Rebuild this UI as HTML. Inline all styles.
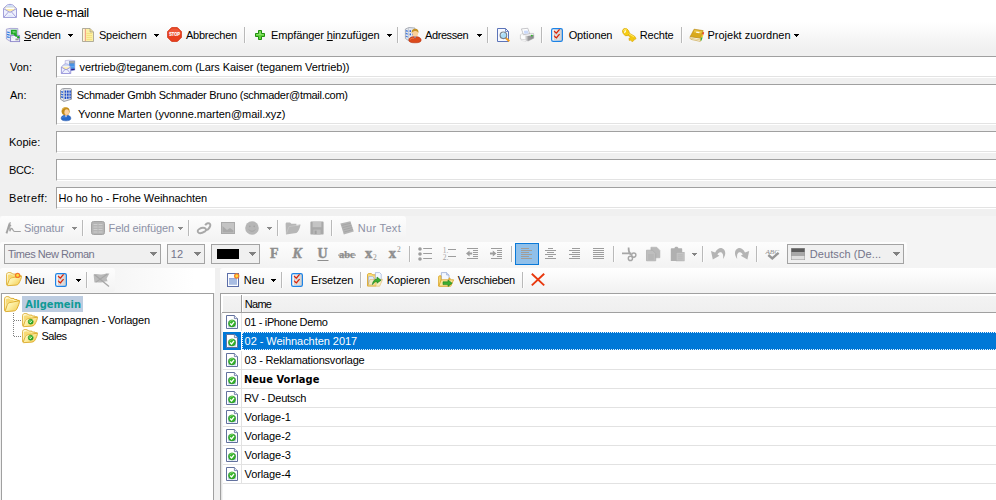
<!DOCTYPE html>
<html lang="de">
<head>
<meta charset="utf-8">
<title>Neue e-mail</title>
<style>
html,body{margin:0;padding:0;}
body{width:996px;height:500px;overflow:hidden;position:relative;background:#f0f0f0;
 font-family:"Liberation Sans",sans-serif;font-size:11px;color:#000;}
.a{position:absolute;}
.t{position:absolute;white-space:pre;line-height:13px;height:13px;font-size:11px;}
.box{position:absolute;background:#fff;border-top:1px solid #a0a0a0;border-left:1px solid #a0a0a0;border-bottom:1px solid #fff;box-shadow:inset 0 -1px 0 #e3e3e3;left:56px;width:950px;box-sizing:border-box;}
.sep{position:absolute;width:1px;height:16px;background:#b9b9b9;box-shadow:1px 0 0 #fdfdfd;}
.sep.g{background:#b9b9b9;}
.arr{position:absolute;width:0;height:0;border-left:3px solid transparent;border-right:3px solid transparent;border-top:3px solid #000;}
.arr.g{border-top-color:#8c8c8c;}
.arr.s{border-left-width:2.5px;border-right-width:2.5px;}
.arr.b{border-left-width:3.5px;border-right-width:3.5px;border-top-width:4px;border-top-color:#808080;}
svg{position:absolute;overflow:visible;}
.combo{position:absolute;box-sizing:border-box;border:1px solid #a3a3a3;background:#f0f0f0;height:20px;top:244px;}
.row{position:absolute;left:223px;width:773px;height:18px;border-bottom:1px solid #e2e2e2;background:#fff;}
.row i{position:absolute;left:18px;top:0;width:1px;height:18px;background:#e2e2e2;}
.band{position:absolute;background:linear-gradient(#fdfdfd,#f3f3f3);border-radius:3px;}
</style>
</head>
<body>
<!-- title bar -->
<div class="a" style="left:0;top:0;width:996px;height:22px;background:#fff"></div>
<svg style="left:3px;top:4px" width="14" height="14" viewBox="0 0 14 14"><path d="M0.5 4.4 L4.4 0.9 C5.4 0.2 8.6 0.2 9.6 0.9 L13.5 4.4 V13.5 H0.5 Z" fill="#eef0fd" stroke="#9896d6" stroke-width=".9"/><path d="M2 4 L4.8 1.4 C5.6 0.9 8.4 0.9 9.2 1.4 L12 4 Z" fill="#cddff9"/><path d="M2.2 3.2 H11.8 V5.4 L7 8 L2.2 5.4 Z" fill="#ffffff" stroke="#c9c4b0" stroke-width=".5"/><path d="M2.4 5 H11.6 V5.6 L8.6 7.2 H5.4 L2.4 5.6 Z" fill="#fdeca6"/><path d="M0.8 4.8 L7 8.4 L13.2 4.8 M0.9 13.2 L5.6 7.8 M13.1 13.2 L8.4 7.8" fill="none" stroke="#9896d6" stroke-width=".85"/><path d="M3.4 12.6 C5 10.4 9 10.4 10.6 12.6 Z" fill="#d5e4fa" opacity=".8"/></svg>
<div class="t" style="left:23px;top:6px;letter-spacing:-0.4px;font-size:13px;">Neue e-mail</div>
<!-- main toolbar -->
<div class="a" style="left:0;top:22px;width:996px;height:27px;background:linear-gradient(#fff,#f0f0f0)"></div>
<svg style="left:6px;top:28px" width="14" height="14" viewBox="0 0 14 14"><path d="M0.4 1.2 L4 0.4 L11.8 0.5 V7.4 H4.6 V13.5 L0.4 11 Z" fill="#e6ebf7" stroke="#9b97cd" stroke-width=".8"/><path d="M4.3 1.2 V13" stroke="#b9b6dc" stroke-width=".7"/><path d="M1 4 L3.7 4.7 M1 6.4 L3.7 7.1 M1 8.8 L3.7 9.5" stroke="#2a7ae2" stroke-width="1.2"/><rect x="4.6" y="7.4" width="9" height="6.2" fill="#f3f5fd" stroke="#8c85c9" stroke-width=".9"/><path d="M5 7.8 L7.4 10 M13.2 7.8 L10.6 10" stroke="#c5c3e2" stroke-width=".7"/><rect x="9.4" y="10.6" width="3.2" height="1.7" fill="#9a9a9a"/><path d="M5 1.8 H10.8 V6.6 L11.6 9 L9.2 8.6 L7.6 6.4 H5 Z" fill="#21a62a"/><path d="M6.2 3 H9.6 V5.4 L8.4 4.6 L7.2 5.4 Z" fill="#7ee07c" opacity=".8"/><circle cx="12.3" cy="9.2" r="1.2" fill="#1f9e28"/></svg>
<div class="t" style="left:24px;top:29px;letter-spacing:-0.2px;"><u>S</u>enden</div>
<svg style="left:68px;top:34px" width="5" height="3" shape-rendering="crispEdges"><path d="M0 0h5v1h-1v1h-1v1h-1v-1h-1v-1h-1z" fill="#000"/></svg>
<svg style="left:82px;top:28px" width="12" height="14" viewBox="0 0 12 14"><path d="M0.5 0.5 H8 L11.5 4 V13.5 H0.5 Z" fill="#fbf0a4" stroke="#9a9588" stroke-width=".75"/><path d="M1 1 H3 V13 H1 Z" fill="#fdf8d8"/><path d="M8 0.5 V4 H11.5" fill="#e8d890" stroke="#9a9588" stroke-width=".6"/><path d="M3.3 1 V13" stroke="#ee8a7a" stroke-width=".9"/><path d="M4.5 5.5 H10 M4.5 7.5 H10 M4.5 9.5 H10 M4.5 11.5 H10" stroke="#f3dc78" stroke-width=".8"/></svg>
<div class="t" style="left:99px;top:29px;letter-spacing:-0.22px;">Speichern</div>
<svg style="left:154px;top:34px" width="5" height="3" shape-rendering="crispEdges"><path d="M0 0h5v1h-1v1h-1v1h-1v-1h-1v-1h-1z" fill="#000"/></svg>
<svg style="left:166.7px;top:27.4px" width="15" height="15" viewBox="0 0 15 15"><path d="M4.6 0.6 H10.4 L14.4 4.6 V10.4 L10.4 14.4 H4.6 L0.6 10.4 V4.6 Z" fill="#e8401e" stroke="#d03010" stroke-width=".8"/><path d="M4.8 1.4 H10.2 L13.6 4.8 V7 H1.4 V4.8 Z" fill="#f0674a" opacity=".6"/><text x="7.5" y="9.4" font-family="Liberation Sans,sans-serif" font-size="5.2" font-weight="bold" fill="#fff" stroke="#fff" stroke-width=".2" text-anchor="middle" textLength="10.4" lengthAdjust="spacingAndGlyphs">STOP</text></svg>
<div class="t" style="left:186px;top:29px;letter-spacing:-0.25px;">Abbrechen</div>
<div class="sep " style="left:244px;top:27px"></div>
<svg style="left:255px;top:30px" width="10" height="10" viewBox="0 0 10 10"><path d="M3.5 0.5 H6.5 V3.5 H9.5 V6.5 H6.5 V9.5 H3.5 V6.5 H0.5 V3.5 H3.5 Z" fill="#5fd238" stroke="#1f8f0e"/><path d="M4.3 1.3 H5.7 V4.3 H8.7 V5 H1.3 V4.3 H4.3 Z" fill="#9be57e" opacity=".8"/></svg>
<div class="t" style="left:271px;top:29px;letter-spacing:-0.11px;">Empfänger <u>h</u>inzufügen</div>
<svg style="left:387px;top:34px" width="5" height="3" shape-rendering="crispEdges"><path d="M0 0h5v1h-1v1h-1v1h-1v-1h-1v-1h-1z" fill="#000"/></svg>
<div class="sep " style="left:397px;top:27px"></div>
<svg style="left:404px;top:27px" width="18" height="16" viewBox="0 0 18 16"><path d="M1.4 2 L4.9 0.5 L10.9 1 V12.5 L4.9 13.8 L1.4 11.5 Z" fill="#e4e8ee" stroke="#9a9faa" stroke-width=".8"/><path d="M4.5 0.8 V13.5" stroke="#b4b9c4" stroke-width=".6"/><path d="M1.8 3.6 L3.8 4.4 M1.8 6.4 L3.8 7.2 M1.8 9.2 L3.8 10" stroke="#3f78e0" stroke-width="1.2"/><path d="M5.6 3.2 H7 V5 H5.6 Z M5.6 6.4 H7 V8.2 H5.6 Z M8 3.2 H9.4 V5 H8 Z M8 6.4 H9.4 V8.2 H8 Z" fill="#2f63d8"/><path d="M4.9 13.4 C4.6 11 7.2 9.6 11 9.6 C14.8 9.6 17.4 11 17.1 13.4 C16.9 15.2 14.6 15.8 11 15.8 C7.4 15.8 5.1 15.2 4.9 13.4 Z" fill="#dc4a1c" stroke="#b83410" stroke-width=".6"/><path d="M6 12.6 C7.4 11 9 10.8 10 11.6" fill="none" stroke="#ee7a4c" stroke-width=".9"/><path d="M9.6 9.6 L11 11.6 L12.4 9.6 Z" fill="#8a90c0"/><ellipse cx="11.2" cy="6" rx="3" ry="3.6" fill="#fbd09a"/><path d="M7.8 6.2 C7.4 2.6 9.4 1.6 11.4 1.7 C13.6 1.8 15 3.2 14.4 6.2 C14 4.8 13 3.8 11 4 C9.4 4.1 8.4 5 7.8 6.2 Z" fill="#c69228"/></svg>
<div class="t" style="left:425px;top:29px;letter-spacing:-0.41px;">Adressen</div>
<svg style="left:477px;top:34px" width="5" height="3" shape-rendering="crispEdges"><path d="M0 0h5v1h-1v1h-1v1h-1v-1h-1v-1h-1z" fill="#000"/></svg>
<div class="sep " style="left:487px;top:27px"></div>
<svg style="left:497px;top:28px" width="13" height="14" viewBox="0 0 13 14"><path d="M0.5 0.5 H8.5 L11.5 3.5 V13.5 H0.5 Z" fill="#f7f9ff" stroke="#5c74b8"/><path d="M8.5 0.5 V3.5 H11.5" fill="none" stroke="#5c74b8" stroke-width=".8"/><path d="M8.6 9.8 L12.3 13.3" stroke="#f59a1e" stroke-width="2"/><circle cx="6.4" cy="7.3" r="3.3" fill="#aadcf6" stroke="#7c8088" stroke-width="1.1"/><path d="M4.6 6.6 A2 2 0 0 1 6.6 5" fill="none" stroke="#e8f8ff" stroke-width=".8"/></svg>
<svg style="left:520px;top:28px" width="14" height="14" viewBox="0 0 14 14"><defs><linearGradient id="prg" x1="0" y1="0" x2="1" y2="0"><stop offset=".3" stop-color="#fcfcfc"/><stop offset=".6" stop-color="#9a9a9c"/><stop offset="1" stop-color="#858588"/></linearGradient></defs><path d="M0.4 6.8 L3 5.4 L13.4 5.4 L13.8 6.8 V10.2 L8.2 13 L0.4 11 Z" fill="url(#prg)" stroke="#aaaaae" stroke-width=".5"/><path d="M0.5 6.9 L3 5.5 L13.4 5.5 L13.7 6.9 L7.6 8 Z" fill="#efeff1"/><path d="M1.4 0.9 L7.8 0.3 L9.6 5.6 L3.5 6.7 Z" fill="#ffffff" stroke="#a2a2aa" stroke-width=".6"/><path d="M3.7 2.8 L7.6 2.4 L8.8 5.3 L4.5 6.1 Z" fill="#c9d8f8"/><path d="M1.8 11.2 L6.8 12.4 L6 13.6 L1.4 12.4 Z" fill="#fff" stroke="#c4c4c8" stroke-width=".4"/><circle cx="11.8" cy="7.6" r=".95" fill="#30c028"/></svg>
<div class="sep " style="left:541px;top:27px"></div>
<svg style="left:551px;top:28px" width="12" height="14" viewBox="0 0 12 14"><defs><linearGradient id="opg" x1="0" y1="0" x2="1" y2="0"><stop offset="0" stop-color="#fbfbfb"/><stop offset="1" stop-color="#cdcdcd"/></linearGradient></defs><rect x="0.6" y="0.6" width="10.8" height="12.8" rx="1.6" fill="url(#opg)" stroke="#1d83e6" stroke-width="1.2"/><rect x="3.6" y="4.6" width="3" height="2.2" fill="#fff" stroke="#b4b4b4" stroke-width=".5"/><rect x="3.6" y="9.4" width="3" height="2.2" fill="#fff" stroke="#b4b4b4" stroke-width=".5"/><path d="M3.1 2.9 L5.2 5.2 L8.6 1.3" fill="none" stroke="#d8240a" stroke-width="1.25"/><path d="M3.1 7.7 L5.2 10 L8.6 6.1" fill="none" stroke="#d8240a" stroke-width="1.25"/></svg>
<div class="t" style="left:568.7px;top:29px;letter-spacing:-0.12px;">Optionen</div>
<svg style="left:621.7px;top:28.4px" width="15" height="14" viewBox="0 0 15 14"><path d="M6 4.4 L12.6 8.2 L14.1 10.6 L12.7 11.7 L11.7 10.8 L11.7 12.7 L10 13.7 L8.8 12.1 L7.3 12.5 L6.9 10.4 L8.7 9.3 L5.2 6.8 Z" fill="#f4c90e" stroke="#d7a306" stroke-width=".6"/><ellipse cx="3.9" cy="4.1" rx="3" ry="3.9" transform="rotate(-28 3.9 4.1)" fill="#f6cd14" stroke="#d9a508" stroke-width=".7"/><path d="M1.6 3 C2 1.6 3.4 0.8 4.8 1" fill="none" stroke="#fff27e" stroke-width=".9"/><ellipse cx="3.1" cy="3.7" rx=".75" ry="1.6" transform="rotate(28 3.1 3.7)" fill="#fffbe6"/><path d="M6.6 5.6 L12 8.9" stroke="#fff07a" stroke-width=".8"/></svg>
<div class="t" style="left:639.7px;top:29px;letter-spacing:-0.16px;">Rechte</div>
<div class="sep " style="left:681px;top:27px"></div>
<svg style="left:689px;top:29px" width="16" height="13" viewBox="0 0 16 13"><path d="M13.4 2.8 L15.2 3.4 L14.4 5.8 L12.8 5.4 Z" fill="#ea3a24"/><path d="M12.7 5.6 L14.4 6 L13.6 8.4 L12 8 Z" fill="#f4d020"/><path d="M11.8 8.2 L13.6 8.6 L12.4 11.8 L10.8 11.4 Z" fill="#35b235"/><path d="M1.2 7.6 L11.5 9.1 L11.3 12.4 L2 10.4 C1 10 0.8 8.6 1.2 7.6 Z" fill="#fdfdf6" stroke="#c2962a" stroke-width=".6"/><path d="M1.6 9.2 L11.3 10.9" stroke="#d8b040" stroke-width=".6"/><path d="M5.1 0.2 L14.2 1.6 L11.5 9.1 L1.2 7.6 Z" fill="#d9a91c" stroke="#b88a10" stroke-width=".6"/><path d="M5.6 1 L13 2.2 L12.2 4.4 L4.6 3.2 Z" fill="#f0d058" opacity=".75"/><path d="M7.4 2.4 L10.6 2.9 L10.2 4.2 L7 3.7 Z" fill="#fffbe8"/></svg>
<div class="t" style="left:707.5px;top:29px;letter-spacing:-0.01px;">Projekt zuordnen</div>
<svg style="left:794px;top:34px" width="5" height="3" shape-rendering="crispEdges"><path d="M0 0h5v1h-1v1h-1v1h-1v-1h-1v-1h-1z" fill="#000"/></svg>
<!-- address form -->
<div class="t" style="left:10px;top:61px;">Von:</div>
<div class="box" style="top:56px;height:22px"></div>
<svg style="left:61px;top:60px" width="14" height="14" viewBox="0 0 14 14"><path d="M4.2 0.6 L8 0.2 L13.8 0.6 V10.2 L9 10.8 L4.2 10 Z" fill="#eceefb" stroke="#a9a6d6" stroke-width=".6"/><path d="M8.2 1 L13.6 1 V10 L8.2 10.6 Z" fill="#2c7fe0"/><path d="M8.2 1 L13.6 1 V3.4 L8.2 3.6 Z" fill="#a4a4a8"/><path d="M8.2 9 L13.6 8.6 V10 L8.2 10.6 Z" fill="#2c1c84"/><path d="M8.4 5 H13.4 M8.4 6.6 H13.4 M8.4 8 H13.4" stroke="#8ec4f8" stroke-width=".6"/><g transform="translate(0 3.8) scale(.72)"><path d="M0.5 4.4 L4.4 0.9 C5.4 0.2 8.6 0.2 9.6 0.9 L13.5 4.4 V13.5 H0.5 Z" fill="#eef0fd" stroke="#8f8cd6" stroke-width="1.2"/><path d="M2 4 L4.8 1.4 C5.6 0.9 8.4 0.9 9.2 1.4 L12 4 Z" fill="#cddff9"/><path d="M2.2 3.2 H11.8 V5.4 L7 8 L2.2 5.4 Z" fill="#ffffff" stroke="#c9c4b0" stroke-width=".5"/><path d="M2.4 4.8 H11.6 V5.6 L8.6 7.2 H5.4 L2.4 5.6 Z" fill="#fdeca6"/><path d="M0.8 4.8 L7 8.4 L13.2 4.8 M0.9 13.2 L5.6 7.8 M13.1 13.2 L8.4 7.8" fill="none" stroke="#8f8cd6" stroke-width="1.1"/></g></svg>
<div class="t" style="left:79.5px;top:61px;letter-spacing:-0.09px;">vertrieb@teganem.com (Lars Kaiser (teganem Vertrieb))</div>
<div class="t" style="left:10px;top:89px;">An:</div>
<div class="box" style="top:84px;height:41px"></div>
<svg style="left:60px;top:88px" width="12" height="14" viewBox="0 0 12 14"><path d="M0.5 2.2 C1.6 1 2.6 0.6 3.8 0.5 L10.6 0.6 C11.2 0.7 11.5 1 11.5 1.6 V11.2 L3.8 13.5 L0.5 11.2 Z" fill="#e6e8ec" stroke="#85888f" stroke-width=".8"/><path d="M3.7 1 V13.2" stroke="#a3a7b0" stroke-width=".6"/><path d="M1.1 3.6 L3.1 4.3 M1.1 6.2 L3.1 6.9 M1.1 8.8 L3.1 9.5" stroke="#2f66d6" stroke-width="1.5"/><path d="M4.6 2.4 h1.7 v2.3 h-1.7 Z M7 2.4 h1.7 v2.3 h-1.7 Z M9.4 2.4 h1.5 v2.3 h-1.5 Z M4.6 5.5 h1.7 v2.3 h-1.7 Z M7 5.5 h1.7 v2.3 h-1.7 Z M9.4 5.5 h1.5 v2.3 h-1.5 Z M4.6 8.6 h1.7 v2.3 h-1.7 Z M7 8.6 h1.7 v2.1 h-1.7 Z M9.4 8.6 h1.5 v1.8 h-1.5 Z" fill="#1d4cc6"/></svg>
<div class="t" style="left:76.7px;top:89px;letter-spacing:-0.3px;">Schmader Gmbh Schmader Bruno (schmader@tmail.com)</div>
<svg style="left:61px;top:107px" width="10" height="14" viewBox="0 0 10 14"><path d="M0.2 11.6 C0 9.4 2 8 5 8 C8 8 10 9.4 9.8 11.6 C9.7 13.2 7.8 13.8 5 13.8 C2.2 13.8 0.3 13.2 0.2 11.6 Z" fill="#2668ca" stroke="#1a4ea6" stroke-width=".5"/><path d="M3.8 8.2 L5 10.6 L6.2 8.2 Z" fill="#e6f0ff"/><path d="M1.4 10.6 C2.4 9.6 3.4 9.6 4.2 10.2" fill="none" stroke="#5a94e6" stroke-width=".8"/><circle cx="4.6" cy="4.2" r="4" fill="#c08a1a"/><path d="M1.2 3 C2 1 4 0.4 5.6 0.8" fill="none" stroke="#e2b44a" stroke-width=".9"/><ellipse cx="5.7" cy="5.2" rx="2.3" ry="2.9" fill="#fcd2a2"/><path d="M4 7 C5 8.2 6.6 8.2 7.6 6.8 C7 8 6.2 8.6 5.6 8.6 C5 8.6 4.4 8 4 7 Z" fill="#f09a50"/></svg>
<div class="t" style="left:78px;top:108px;letter-spacing:-0.02px;">Yvonne Marten (yvonne.marten@mail.xyz)</div>
<div class="t" style="left:9px;top:136px;">Kopie:</div>
<div class="box" style="top:131px;height:22px"></div>
<div class="t" style="left:9px;top:164px;letter-spacing:-0.33px;">BCC:</div>
<div class="box" style="top:159px;height:22px"></div>
<div class="t" style="left:9px;top:192px;letter-spacing:0.43px;">Betreff:</div>
<div class="box" style="top:187px;height:22px"></div>
<div class="t" style="left:58.6px;top:192px;letter-spacing:-0.06px;">Ho ho ho - Frohe Weihnachten</div>
<!-- editor toolbar 1 -->
<div class="a" style="left:0;top:216px;width:996px;height:52px;background:#f4f4f4"></div>
<div class="band" style="left:0;top:216px;width:406px;height:24px"></div>
<svg style="left:6px;top:222px" width="15" height="12" viewBox="0 0 15 12"><path d="M0.5 11.4 L3.6 1.6" stroke="#a2a2a2" stroke-width="1.9" fill="none"/><path d="M3 1.2 L5 0.8 M2.2 3.6 H5.2" stroke="#a2a2a2" stroke-width="1.1" fill="none"/><path d="M3.7 1.6 L3.9 9.2 C4.4 7.6 5.2 6.2 6 6.5 C6.9 6.9 6.9 9.5 8.6 9.5 H14.8" stroke="#a2a2a2" stroke-width="1.2" fill="none"/></svg>
<div class="t" style="left:24px;top:222px;letter-spacing:-0.12px;color:#8d91a6;">Signatur</div>
<svg style="left:72px;top:227px" width="5" height="3" shape-rendering="crispEdges"><path d="M0 0h5v1h-1v1h-1v1h-1v-1h-1v-1h-1z" fill="#8a8a8a"/></svg>
<div class="sep g" style="left:82px;top:220px"></div>
<svg style="left:91px;top:221px" width="14" height="14" viewBox="0 0 14 14"><rect x="0.5" y="0.5" width="13" height="13" rx="2" fill="#b4b4b4" stroke="#a4a4a4"/><path d="M2.5 3.5 H6.5 M7.5 3.5 H11.5 M2.5 6 H6.5 M7.5 6 H11.5 M2.5 8.5 H6.5 M7.5 8.5 H11.5 M2.5 11 H6.5 M7.5 11 H11.5" stroke="#cdcdcd" stroke-width="1"/></svg>
<div class="t" style="left:108.5px;top:222px;letter-spacing:-0.08px;color:#8d91a6;">Feld einfügen</div>
<svg style="left:178px;top:227px" width="5" height="3" shape-rendering="crispEdges"><path d="M0 0h5v1h-1v1h-1v1h-1v-1h-1v-1h-1z" fill="#8a8a8a"/></svg>
<div class="sep g" style="left:188px;top:220px"></div>
<svg style="left:197px;top:222px" width="14" height="12" viewBox="0 0 14 12"><path d="M8.2 3.2 C9.6 1 12 0.6 13 2 C14 3.4 12.6 5.6 11 7.4 L8.4 8.4" fill="none" stroke="#a8a8a8" stroke-width="2"/><path d="M2.2 7 C0.4 8 0.2 10 1.6 10.8 C3.2 11.8 6 10.6 8 9.4 C9.6 8.2 9.2 6.6 7.6 6 C6 5.4 3.8 6 2.2 7 Z" fill="none" stroke="#a8a8a8" stroke-width="1.9"/></svg>
<svg style="left:221px;top:222px" width="14" height="12" viewBox="0 0 14 12"><rect x="0.5" y="0.5" width="13" height="11" fill="#c4c4c4" stroke="#aaaaaa"/><path d="M1.5 4 L6 8 L9 6 L12.5 8.6 V10.5 H1.5 Z" fill="#a9a9a9"/></svg>
<svg style="left:245px;top:221px" width="14" height="14" viewBox="0 0 14 14"><circle cx="7" cy="7" r="6.8" fill="#b6b6b6"/><circle cx="4.8" cy="5.4" r=".8" fill="#a2a2a2"/><circle cx="9.2" cy="5.4" r=".8" fill="#a2a2a2"/><path d="M3.8 8.6 C5.4 10.8 8.6 10.8 10.2 8.6" fill="none" stroke="#a2a2a2" stroke-width=".9"/></svg>
<svg style="left:267px;top:227px" width="5" height="3" shape-rendering="crispEdges"><path d="M0 0h5v1h-1v1h-1v1h-1v-1h-1v-1h-1z" fill="#8a8a8a"/></svg>
<div class="sep g" style="left:277px;top:220px"></div>
<svg style="left:285px;top:221px" width="16" height="14" viewBox="0 0 16 14"><path d="M0.6 3 C0.6 2 1 1.4 2 1.4 H5 L6.4 2.8 H11.4 V5 L15.6 3.4 C14.6 8 13 11 11.4 12 L1 13.4 Z" fill="#b6b6b6"/><path d="M1.4 12.6 L4 5.6 L15 3.8" fill="none" stroke="#c8c8c8" stroke-width=".8"/></svg>
<svg style="left:310px;top:221px" width="14" height="14" viewBox="0 0 14 14"><path d="M0.4 1.6 C0.4 0.8 0.8 0.4 1.6 0.4 H12.4 C13.2 0.4 13.6 0.8 13.6 1.6 V12.4 C13.6 13.2 13.2 13.6 12.4 13.6 H1.6 C0.8 13.6 0.4 13.2 0.4 12.4 Z" fill="#a9a9a9"/><rect x="2.6" y="0.8" width="8.8" height="5.4" fill="#c4c4c4"/><rect x="3.4" y="8.6" width="7.2" height="5" fill="#bcbcbc"/><rect x="4.6" y="9.6" width="2" height="3.4" fill="#a0a0a0"/></svg>
<div class="sep g" style="left:331px;top:220px"></div>
<svg style="left:340px;top:221px" width="14" height="14" viewBox="0 0 14 14"><path d="M0.4 2.6 L10.4 0.2 L13.8 10.4 L3.8 13.6 Z" fill="#b4b4b4"/><path d="M1.8 4.4 L10.6 2.2 M2.6 6.6 L11.4 4.4 M3.4 8.8 L12.2 6.6 M4.2 11 L13 8.6" stroke="#a2a2a2" stroke-width=".8"/></svg>
<div class="t" style="left:357.7px;top:222px;letter-spacing:0.33px;color:#8d91a6;">Nur Text</div>
<!-- editor toolbar 2 -->
<div class="band" style="left:0;top:242px;width:907px;height:25px"></div>
<div class="combo" style="left:4px;width:157px"></div>
<div class="t" style="left:8px;top:248px;letter-spacing:-0.46px;color:#74748a;">Times New Roman</div>
<svg style="left:150px;top:252px" width="7" height="4" shape-rendering="crispEdges"><path d="M0 0h7v1h-1v1h-1v1h-1v1h-1v-1h-1v-1h-1v-1h-1z" fill="#808080"/></svg>
<div class="combo" style="left:167px;width:38px"></div>
<div class="t" style="left:170.7px;top:248px;letter-spacing:0.2px;color:#74748a;">12</div>
<svg style="left:194px;top:252px" width="7" height="4" shape-rendering="crispEdges"><path d="M0 0h7v1h-1v1h-1v1h-1v1h-1v-1h-1v-1h-1v-1h-1z" fill="#808080"/></svg>
<div class="combo" style="left:211px;width:49px"></div>
<div class="a" style="left:217px;top:249px;width:22px;height:10px;background:#000"></div>
<svg style="left:249px;top:252px" width="7" height="4" shape-rendering="crispEdges"><path d="M0 0h7v1h-1v1h-1v1h-1v1h-1v-1h-1v-1h-1v-1h-1z" fill="#808080"/></svg>
<svg style="left:260px;top:243px" width="520" height="24" viewBox="0 0 520 24"><g font-family="Liberation Serif,serif" font-weight="bold" fill="#8e8e8e" stroke="#8e8e8e" stroke-width=".45"><text x="10" y="15.4" font-size="14">F</text><text x="32.6" y="15.4" font-size="14" font-style="italic">K</text><text x="57.6" y="15.2" font-size="14">U</text><text x="79" y="14.6" font-size="10.5" stroke-width=".25">abc</text><text x="113" y="17.4" font-size="7.5" stroke="none" font-weight="normal">2</text><text x="137" y="9" font-size="7.5" stroke="none" font-weight="normal">2</text></g><g font-family="Liberation Serif,serif" font-weight="bold" fill="#8e8e8e" stroke="#8e8e8e" stroke-width=".5"><text x="105" y="14.6" font-size="14.5">x</text><text x="128.8" y="14.6" font-size="14.5">x</text></g><rect x="57.5" y="17" width="11" height="1" fill="#8e8e8e"/><rect x="78" y="11.6" width="18" height="1" fill="#8e8e8e"/><rect x="149" y="3" width="1" height="16" fill="#b9b9b9"/><rect x="150" y="3" width="1" height="16" fill="#fdfdfd"/><circle cx="160" cy="6" r="1.8" fill="#9d9d9d"/><rect x="163.2" y="5" width="8.8" height="1" fill="#9d9d9d"/><circle cx="160" cy="11" r="1.8" fill="#9d9d9d"/><rect x="163.2" y="10" width="8.8" height="1" fill="#9d9d9d"/><circle cx="160" cy="16" r="1.8" fill="#9d9d9d"/><rect x="163.2" y="15" width="8.8" height="1" fill="#9d9d9d"/><g font-family="Liberation Serif,serif" fill="#a4a4a4" font-size="7.5"><text x="182.8" y="10">1.</text><text x="182.8" y="17">2.</text></g><rect x="188" y="6" width="8" height="1" fill="#9d9d9d"/><rect x="188" y="13" width="8" height="1" fill="#9d9d9d"/><rect x="207" y="5" width="11" height="1" fill="#9d9d9d"/><rect x="207" y="15" width="11" height="1" fill="#9d9d9d"/><rect x="213" y="7" width="5" height="1" fill="#9d9d9d"/><rect x="213" y="9" width="5" height="1" fill="#9d9d9d"/><rect x="213" y="11" width="5" height="1" fill="#9d9d9d"/><rect x="213" y="13" width="5" height="1" fill="#9d9d9d"/><path d="M206 10.5 L209.6 7.5 V9.5 H212.2 V11.5 H209.6 V13.5 Z" fill="#9d9d9d"/><rect x="231" y="5" width="11" height="1" fill="#9d9d9d"/><rect x="231" y="15" width="11" height="1" fill="#9d9d9d"/><rect x="237" y="7" width="5" height="1" fill="#9d9d9d"/><rect x="237" y="9" width="5" height="1" fill="#9d9d9d"/><rect x="237" y="11" width="5" height="1" fill="#9d9d9d"/><rect x="237" y="13" width="5" height="1" fill="#9d9d9d"/><path d="M236.4 10.5 L232.8 7.5 V9.5 H230 V11.5 H232.8 V13.5 Z" fill="#9d9d9d"/><rect x="251" y="3" width="1" height="16" fill="#b9b9b9"/><rect x="252" y="3" width="1" height="16" fill="#fdfdfd"/><rect x="255.5" y="0.5" width="23" height="21" fill="#90c0ea" stroke="#0a79d8"/><rect x="261" y="5" width="8" height="1" fill="#a39d96"/><rect x="261" y="7" width="11" height="1" fill="#a39d96"/><rect x="261" y="9" width="8" height="1" fill="#a39d96"/><rect x="261" y="11" width="11" height="1" fill="#a39d96"/><rect x="261" y="13" width="8" height="1" fill="#a39d96"/><rect x="261" y="15" width="11" height="1" fill="#a39d96"/><rect x="288" y="5" width="5" height="1" fill="#9d9d9d"/><rect x="285" y="7" width="11" height="1" fill="#9d9d9d"/><rect x="287" y="9" width="7" height="1" fill="#9d9d9d"/><rect x="285" y="11" width="11" height="1" fill="#9d9d9d"/><rect x="288" y="13" width="5" height="1" fill="#9d9d9d"/><rect x="285" y="15" width="11" height="1" fill="#9d9d9d"/><rect x="312" y="5" width="8" height="1" fill="#9d9d9d"/><rect x="309" y="7" width="11" height="1" fill="#9d9d9d"/><rect x="312" y="9" width="8" height="1" fill="#9d9d9d"/><rect x="309" y="11" width="11" height="1" fill="#9d9d9d"/><rect x="312" y="13" width="8" height="1" fill="#9d9d9d"/><rect x="309" y="15" width="11" height="1" fill="#9d9d9d"/><rect x="333" y="5" width="11" height="1" fill="#9d9d9d"/><rect x="333" y="7" width="11" height="1" fill="#9d9d9d"/><rect x="333" y="9" width="11" height="1" fill="#9d9d9d"/><rect x="333" y="11" width="11" height="1" fill="#9d9d9d"/><rect x="333" y="13" width="11" height="1" fill="#9d9d9d"/><rect x="333" y="15" width="11" height="1" fill="#9d9d9d"/><rect x="353" y="3" width="1" height="16" fill="#b9b9b9"/><rect x="354" y="3" width="1" height="16" fill="#fdfdfd"/><g transform="translate(362 4.5)" fill="none" stroke="#a6a6a6"><path d="M0 5.8 H9.4 M6.6 0 C6.4 3 6.8 5 8.8 7.4" stroke-width="1.7"/><circle cx="11.8" cy="7.6" r="2.1" stroke-width="1.4"/><circle cx="8.4" cy="10.9" r="2.1" stroke-width="1.4"/></g><g transform="translate(386.29999999999995 4)"><path d="M4.6 0.2 H10.4 L13.6 3.4 V10.8 H4.6 Z" fill="#b9b9b9" stroke="#adadad" stroke-width=".5"/><path d="M0.2 3.2 H6.2 L9.4 6.4 V13.8 H0.2 Z" fill="#bebebe" stroke="#a9a9a9" stroke-width=".7"/><path d="M1.8 8 H7.6 M1.8 10 H7.6 M1.8 12 H7.6" stroke="#adadad" stroke-width=".7"/></g><g transform="translate(410.79999999999995 3.6999999999999886)"><path d="M0 2.6 C0 2 0.4 1.6 1 1.6 H3.6 C3.6 0.5 4.4 0 5.6 0 C6.8 0 7.6 0.5 7.6 1.6 H10.4 C11 1.6 11.4 2 11.4 2.6 V14.2 H0 Z" fill="#b0b0b0"/><rect x="5.4" y="5.6" width="8" height="8.6" fill="#c4c4c4" stroke="#acacac" stroke-width=".6"/><path d="M6.8 8.2 H12 M6.8 10.2 H12 M6.8 12.2 H12" stroke="#b0b0b0" stroke-width=".7"/></g><path shape-rendering="crispEdges" transform="translate(432 10)" d="M0 0h5v1h-1v1h-1v1h-1v-1h-1v-1h-1z" fill="#848484"/><rect x="442" y="3" width="1" height="16" fill="#b9b9b9"/><rect x="443" y="3" width="1" height="16" fill="#fdfdfd"/><path transform="translate(450.79999999999995 4.599999999999994)" d="M0.2 3.4 L2 12 L8.6 8.2 L6.6 7 C7.4 4.8 9.2 4 10.8 5 C12.4 6.2 12.6 8.8 12.2 11.4 C13.2 10.2 14 8.6 14.3 7 C14.9 3.8 13.6 1.2 11.2 0.6 C8.6 0 6 1.6 4.4 5 Z" fill="#b4b4b4"/><path transform="translate(489.4 4.599999999999994) scale(-1 1)" d="M0.2 3.4 L2 12 L8.6 8.2 L6.6 7 C7.4 4.8 9.2 4 10.8 5 C12.4 6.2 12.6 8.8 12.2 11.4 C13.2 10.2 14 8.6 14.3 7 C14.9 3.8 13.6 1.2 11.2 0.6 C8.6 0 6 1.6 4.4 5 Z" fill="#b4b4b4"/><rect x="496" y="3" width="1" height="16" fill="#b9b9b9"/><rect x="497" y="3" width="1" height="16" fill="#fdfdfd"/><text x="505.4" y="10.8" font-family="Liberation Serif,serif" font-style="italic" font-size="6.8" fill="#8c8c8c" textLength="13.6" lengthAdjust="spacingAndGlyphs">ABC</text><path d="M508.3 12 L512.3 15.4 L518.6 9.8" fill="none" stroke="#969696" stroke-width="2.3"/></svg>
<div class="combo" style="left:787px;width:117px"></div>
<svg style="left:791px;top:248px" width="14" height="12" viewBox="0 0 14 12"><rect x="0" y="0" width="14" height="4" fill="#5a5a5a"/><rect x="0" y="4" width="14" height="4" fill="#a8a8a8"/><rect x="0" y="8" width="14" height="4" fill="#dedede"/><rect x="0.25" y="0.25" width="13.5" height="11.5" fill="none" stroke="#9a9a9a" stroke-width=".5"/></svg>
<div class="t" style="left:809.8px;top:248px;letter-spacing:0.08px;color:#74748a;">Deutsch (De...</div>
<svg style="left:893px;top:252px" width="7" height="4" shape-rendering="crispEdges"><path d="M0 0h7v1h-1v1h-1v1h-1v1h-1v-1h-1v-1h-1v-1h-1z" fill="#808080"/></svg>
<!-- tree toolbar -->
<div class="a" style="left:0;top:268px;width:215px;height:25px;background:linear-gradient(90deg,#f5f5f5 0,#f6f6f6 115px,#fff 195px)"></div>
<div class="band" style="left:0;top:268px;width:115px;height:24px"></div>
<svg style="left:6px;top:272px" width="16" height="14" viewBox="0 0 16 14"><g transform="scale(1 .875)"><defs><linearGradient id="fgc" x1="0" y1="0" x2="1" y2="1"><stop offset="0" stop-color="#fffde8"/><stop offset=".5" stop-color="#fdf0a6"/><stop offset="1" stop-color="#f2c84a"/></linearGradient></defs><path d="M0.6 2.8 C0.7 1.3 1.8 0.5 3.2 0.6 L5 0.9 C5.9 1.2 6.1 2.1 6.9 2.3 L10 2.5 L10.4 3.5 L13 3.5 L13.2 4.3 L15.4 4.4 C15.8 6.4 14.2 10.2 12.8 13 C12.3 14.2 11.2 14.8 9.8 15 L1.8 15.6 C0.9 15.6 0.6 15 0.6 14 Z" fill="url(#fgc)" stroke="#d9a521" stroke-width=".9"/><path d="M1.3 14.8 L3.4 8.2 C3.7 7.3 4.3 6.9 5.1 6.7 L15 4.8" fill="none" stroke="#d9a521" stroke-width=".9"/><path d="M2 3 L5 2.6 L6.4 3.8 L9.4 4 V6 L4.6 6.2 C3.6 6.4 3 7 2.6 8 L2 10 Z" fill="#f5d15a" opacity=".75"/></g><circle cx="11.6" cy="3.4" r="2.7" fill="#f4772a"/><circle cx="11.6" cy="3.4" r="1.4" fill="#fbe23c"/></svg>
<div class="t" style="left:24.8px;top:274px;letter-spacing:-0.2px;">Neu</div>
<svg style="left:55px;top:273px" width="12" height="14" viewBox="0 0 12 14"><defs><linearGradient id="opg" x1="0" y1="0" x2="1" y2="0"><stop offset="0" stop-color="#fbfbfb"/><stop offset="1" stop-color="#cdcdcd"/></linearGradient></defs><rect x="0.6" y="0.6" width="10.8" height="12.8" rx="1.6" fill="url(#opg)" stroke="#1d83e6" stroke-width="1.2"/><rect x="3.6" y="4.6" width="3" height="2.2" fill="#fff" stroke="#b4b4b4" stroke-width=".5"/><rect x="3.6" y="9.4" width="3" height="2.2" fill="#fff" stroke="#b4b4b4" stroke-width=".5"/><path d="M3.1 2.9 L5.2 5.2 L8.6 1.3" fill="none" stroke="#d8240a" stroke-width="1.25"/><path d="M3.1 7.7 L5.2 10 L8.6 6.1" fill="none" stroke="#d8240a" stroke-width="1.25"/></svg>
<svg style="left:76px;top:279px" width="5" height="3" shape-rendering="crispEdges"><path d="M0 0h5v1h-1v1h-1v1h-1v-1h-1v-1h-1z" fill="#000"/></svg>
<div class="sep g" style="left:86px;top:272px"></div>
<svg style="left:93px;top:273px" width="17" height="14" viewBox="0 0 17 14"><path d="M0.6 1.6 C3.6 0.2 6 1.8 8.6 1.4 C11.4 1 13.6 0 16.4 0.6 L13.6 5.6 L14.6 8.4 C12 8 10.4 9.4 8 9.6 C5.4 9.8 3.6 8.6 1.4 9.6 Z" fill="#bababa"/><path d="M1.4 1.4 L16 13.4" stroke="#a6a6a6" stroke-width="1.3"/><path d="M14.4 1 L2.6 9.4" stroke="#a6a6a6" stroke-width="1.1"/></svg>
<!-- list toolbar -->
<div class="a" style="left:220px;top:268px;width:776px;height:25px;background:linear-gradient(#fff,#f1f1f1);border-radius:3px 0 0 0"></div>
<svg style="left:227px;top:273px" width="13" height="14" viewBox="0 0 13 14"><rect x="0.5" y="0.5" width="11" height="13" fill="#fbfcff" stroke="#5b6ea8"/><rect x="2" y="5.6" width="8" height="6.2" fill="#a9bde2"/><path d="M2 5.6 H10" stroke="#7d94c8" stroke-width=".8"/><circle cx="9.7" cy="3" r="2.7" fill="#f47a2a"/><circle cx="9.7" cy="3" r="1.4" fill="#fbe23c"/></svg>
<div class="t" style="left:243.7px;top:274px;letter-spacing:0.2px;">Neu</div>
<svg style="left:271px;top:279px" width="5" height="3" shape-rendering="crispEdges"><path d="M0 0h5v1h-1v1h-1v1h-1v-1h-1v-1h-1z" fill="#000"/></svg>
<div class="sep g" style="left:281px;top:272px"></div>
<svg style="left:291px;top:273px" width="12" height="14" viewBox="0 0 12 14"><defs><linearGradient id="opg" x1="0" y1="0" x2="1" y2="0"><stop offset="0" stop-color="#fbfbfb"/><stop offset="1" stop-color="#cdcdcd"/></linearGradient></defs><rect x="0.6" y="0.6" width="10.8" height="12.8" rx="1.6" fill="url(#opg)" stroke="#1d83e6" stroke-width="1.2"/><rect x="3.6" y="4.6" width="3" height="2.2" fill="#fff" stroke="#b4b4b4" stroke-width=".5"/><rect x="3.6" y="9.4" width="3" height="2.2" fill="#fff" stroke="#b4b4b4" stroke-width=".5"/><path d="M3.1 2.9 L5.2 5.2 L8.6 1.3" fill="none" stroke="#d8240a" stroke-width="1.25"/><path d="M3.1 7.7 L5.2 10 L8.6 6.1" fill="none" stroke="#d8240a" stroke-width="1.25"/></svg>
<div class="t" style="left:311px;top:274px;letter-spacing:-0.14px;">Ersetzen</div>
<div class="sep g" style="left:360px;top:272px"></div>
<svg style="left:367px;top:272px" width="16" height="15" viewBox="0 0 16 15"><path d="M0.5 3 C0.5 2 1 1.6 1.8 1.6 H4.4 L5.6 2.8 H9 V13.8 H0.5 Z" fill="#f8dc7c" stroke="#d8a020" stroke-width=".8"/><path d="M1.6 4.6 H5.6 L7 6 V12.6 H1.6 Z" fill="#e6eefc" stroke="#8fa2cc" stroke-width=".6"/><path d="M8.4 0.6 H12.6 L14.2 2.2 V9 H8.4 Z" fill="#f4f8ff" stroke="#8fa2cc" stroke-width=".6"/><path d="M0.6 14.2 L3 7.4 H15.6 L12.6 14.2 Z" fill="#fbe89a" stroke="#d8a020" stroke-width=".8" opacity=".55"/><path d="M5.4 12.6 C5.6 9.4 7.4 7.4 10 7 V5 L14 8.2 L10 11.2 V9.4 C8 9.6 6.6 10.8 5.4 12.6 Z" fill="#3cae32" stroke="#1e8018" stroke-width=".6"/></svg>
<div class="t" style="left:386.7px;top:274px;letter-spacing:-0.08px;">Kopieren</div>
<svg style="left:438px;top:272px" width="16" height="15" viewBox="0 0 16 15"><path d="M3.4 0.6 H8.6 L11 3 V9 H3.4 Z" fill="#f4f8ff" stroke="#8fa2cc" stroke-width=".7"/><path d="M8.6 0.6 V3 H11" fill="#cddcf6" stroke="#8fa2cc" stroke-width=".6"/><path d="M0.6 5 C0.6 4.2 1 3.8 1.8 3.8 H3 V9 H11 V6 H12 V14 H0.6 Z" fill="#f8dc7c" stroke="#d8a020" stroke-width=".8"/><path d="M0.8 14.2 L3.2 7.8 H15.6 L12.8 14.2 Z" fill="#fbe89a" stroke="#d8a020" stroke-width=".8"/><path d="M5 9.8 H10 V8 L14.2 11.2 L10 14.4 V12.6 H5 Z" fill="#3cae32" stroke="#1e8018" stroke-width=".6"/></svg>
<div class="t" style="left:457.8px;top:274px;letter-spacing:-0.32px;">Verschieben</div>
<div class="sep g" style="left:522px;top:272px"></div>
<svg style="left:531px;top:273px" width="14" height="13" viewBox="0 0 14 13"><path d="M0.8 0.8 L13.2 12.4 M13.2 0.8 L0.8 12.4" stroke="#e8380e" stroke-width="1.9"/></svg>
<!-- folder tree -->
<div class="a" style="left:1px;top:293px;width:213px;height:215px;background:#fff;border:1px solid #a0a0a0;box-sizing:border-box"></div>
<svg style="left:13px;top:313px" width="9" height="25" viewBox="0 0 9 25"><path d="M0.5 0 V23.5" stroke="#808080" stroke-width="1" stroke-dasharray="1 1"/><path d="M1 7.5 H9 M1 23.5 H9" stroke="#808080" stroke-width="1" stroke-dasharray="1 1"/></svg>
<svg style="left:4px;top:296px" width="16" height="16" viewBox="0 0 16 16"><defs><linearGradient id="fga" x1="0" y1="0" x2="1" y2="1"><stop offset="0" stop-color="#fffde8"/><stop offset=".5" stop-color="#fdf0a6"/><stop offset="1" stop-color="#f2c84a"/></linearGradient></defs><path d="M0.6 2.8 C0.7 1.3 1.8 0.5 3.2 0.6 L5 0.9 C5.9 1.2 6.1 2.1 6.9 2.3 L10 2.5 L10.4 3.5 L13 3.5 L13.2 4.3 L15.4 4.4 C15.8 6.4 14.2 10.2 12.8 13 C12.3 14.2 11.2 14.8 9.8 15 L1.8 15.6 C0.9 15.6 0.6 15 0.6 14 Z" fill="url(#fga)" stroke="#d9a521" stroke-width=".9"/><path d="M1.3 14.8 L3.4 8.2 C3.7 7.3 4.3 6.9 5.1 6.7 L15 4.8" fill="none" stroke="#d9a521" stroke-width=".9"/><path d="M2 3 L5 2.6 L6.4 3.8 L9.4 4 V6 L4.6 6.2 C3.6 6.4 3 7 2.6 8 L2 10 Z" fill="#f5d15a" opacity=".75"/></svg>
<div class="a" style="left:22px;top:296px;width:61px;height:16px;background:#bccce0"></div>
<div class="t" style="left:25.3px;top:298px;font-family:'DejaVu Sans Condensed','Liberation Sans',sans-serif;font-weight:bold;color:#0f9a96;">Allgemein</div>
<svg style="left:22px;top:313px" width="16" height="14" viewBox="0 0 16 14"><g transform="scale(1 .875)"><defs><linearGradient id="fgb" x1="0" y1="0" x2="1" y2="1"><stop offset="0" stop-color="#fffde8"/><stop offset=".5" stop-color="#fdf0a6"/><stop offset="1" stop-color="#f2c84a"/></linearGradient></defs><path d="M0.6 2.8 C0.7 1.3 1.8 0.5 3.2 0.6 L5 0.9 C5.9 1.2 6.1 2.1 6.9 2.3 L10 2.5 L10.4 3.5 L13 3.5 L13.2 4.3 L15.4 4.4 C15.8 6.4 14.2 10.2 12.8 13 C12.3 14.2 11.2 14.8 9.8 15 L1.8 15.6 C0.9 15.6 0.6 15 0.6 14 Z" fill="url(#fgb)" stroke="#d9a521" stroke-width=".9"/><path d="M1.3 14.8 L3.4 8.2 C3.7 7.3 4.3 6.9 5.1 6.7 L15 4.8" fill="none" stroke="#d9a521" stroke-width=".9"/><path d="M2 3 L5 2.6 L6.4 3.8 L9.4 4 V6 L4.6 6.2 C3.6 6.4 3 7 2.6 8 L2 10 Z" fill="#f5d15a" opacity=".75"/></g><circle cx="8.7" cy="8.7" r="2.5" fill="#2fab25" stroke="#1d8517" stroke-width=".5"/><circle cx="8" cy="7.9" r="1.1" fill="#7fdc6a" opacity=".7"/><path d="M7.4 8.8 L8.4 9.8 L10 7.6" fill="none" stroke="#eaffea" stroke-width=".9"/></svg>
<div class="t" style="left:41.5px;top:314px;letter-spacing:-0.21px;">Kampagnen - Vorlagen</div>
<svg style="left:22px;top:329px" width="16" height="14" viewBox="0 0 16 14"><g transform="scale(1 .875)"><defs><linearGradient id="fgb" x1="0" y1="0" x2="1" y2="1"><stop offset="0" stop-color="#fffde8"/><stop offset=".5" stop-color="#fdf0a6"/><stop offset="1" stop-color="#f2c84a"/></linearGradient></defs><path d="M0.6 2.8 C0.7 1.3 1.8 0.5 3.2 0.6 L5 0.9 C5.9 1.2 6.1 2.1 6.9 2.3 L10 2.5 L10.4 3.5 L13 3.5 L13.2 4.3 L15.4 4.4 C15.8 6.4 14.2 10.2 12.8 13 C12.3 14.2 11.2 14.8 9.8 15 L1.8 15.6 C0.9 15.6 0.6 15 0.6 14 Z" fill="url(#fgb)" stroke="#d9a521" stroke-width=".9"/><path d="M1.3 14.8 L3.4 8.2 C3.7 7.3 4.3 6.9 5.1 6.7 L15 4.8" fill="none" stroke="#d9a521" stroke-width=".9"/><path d="M2 3 L5 2.6 L6.4 3.8 L9.4 4 V6 L4.6 6.2 C3.6 6.4 3 7 2.6 8 L2 10 Z" fill="#f5d15a" opacity=".75"/></g><circle cx="8.7" cy="8.7" r="2.5" fill="#2fab25" stroke="#1d8517" stroke-width=".5"/><circle cx="8" cy="7.9" r="1.1" fill="#7fdc6a" opacity=".7"/><path d="M7.4 8.8 L8.4 9.8 L10 7.6" fill="none" stroke="#eaffea" stroke-width=".9"/></svg>
<div class="t" style="left:41.5px;top:330px;letter-spacing:-0.5px;">Sales</div>
<!-- template grid -->
<div class="a" style="left:220px;top:293px;width:790px;height:215px;background:#fff;border:1px solid #a0a0a0;box-sizing:border-box"></div>
<div class="a" style="left:221px;top:313px;width:1px;height:187px;background:#e4e4e4"></div>
<div class="a" style="left:222px;top:313px;width:1px;height:187px;background:#f4f4f4"></div>
<div class="a" style="left:223px;top:296px;width:773px;height:16px;background:linear-gradient(#f3f3f3,#efefef)"></div>
<div class="a" style="left:222px;top:312px;width:774px;height:1px;background:#a0a0a0"></div>
<div class="a" style="left:241px;top:295px;width:1px;height:18px;background:#a0a0a0"></div>
<div class="a" style="left:242px;top:295px;width:1px;height:17px;background:#fff"></div>
<div class="t" style="left:244.8px;top:298px;letter-spacing:-0.73px;">Name</div>
<div class="row" style="top:313px"><i></i></div>
<svg style="left:226px;top:315px" width="12" height="14" viewBox="0 0 12 14"><path d="M0.5 0.5 H8.4 L11.5 3.6 V13.5 H0.5 Z" fill="#fff" stroke="#62719e"/><path d="M8.4 0.5 V3.6 H11.5" fill="#e8ecf6" stroke="#62719e" stroke-width=".8"/><rect x="2" y="6" width="8" height="6.4" fill="#c4d3ee"/><circle cx="6" cy="8.4" r="3.5" fill="#35b329" stroke="#1f8c19" stroke-width=".6"/><path d="M3.6 7.4 C4 6 5.4 5.4 6.8 5.6" fill="none" stroke="#8fe47c" stroke-width=".8"/><path d="M4.1 8.5 L5.6 10 L8 6.9" fill="none" stroke="#fff" stroke-width="1.3"/></svg>
<div class="t" style="left:244.6px;top:316px;letter-spacing:-0.36px;">01 - iPhone Demo</div>
<div class="row" style="top:331px;height:18px;background:#fff;border:0"></div>
<div class="a" style="left:223px;top:332px;width:18px;height:18px;background:#0078d7"></div>
<div class="a" style="left:242px;top:332px;width:760px;height:18px;background:#0078d7;box-sizing:border-box;border:1px dotted #e8f2fb"></div>
<svg style="left:226px;top:334px" width="12" height="14" viewBox="0 0 12 14"><path d="M0.5 0.5 H8.4 L11.5 3.6 V13.5 H0.5 Z" fill="#fff" stroke="#62719e"/><path d="M8.4 0.5 V3.6 H11.5" fill="#e8ecf6" stroke="#62719e" stroke-width=".8"/><rect x="2" y="6" width="8" height="6.4" fill="#c4d3ee"/><circle cx="6" cy="8.4" r="3.5" fill="#35b329" stroke="#1f8c19" stroke-width=".6"/><path d="M3.6 7.4 C4 6 5.4 5.4 6.8 5.6" fill="none" stroke="#8fe47c" stroke-width=".8"/><path d="M4.1 8.5 L5.6 10 L8 6.9" fill="none" stroke="#fff" stroke-width="1.3"/></svg>
<div class="t" style="left:244.6px;top:335px;letter-spacing:-0.05px;color:#fff;">02 - Weihnachten 2017</div>
<div class="row" style="top:351px"><i></i></div>
<svg style="left:226px;top:353px" width="12" height="14" viewBox="0 0 12 14"><path d="M0.5 0.5 H8.4 L11.5 3.6 V13.5 H0.5 Z" fill="#fff" stroke="#62719e"/><path d="M8.4 0.5 V3.6 H11.5" fill="#e8ecf6" stroke="#62719e" stroke-width=".8"/><rect x="2" y="6" width="8" height="6.4" fill="#c4d3ee"/><circle cx="6" cy="8.4" r="3.5" fill="#35b329" stroke="#1f8c19" stroke-width=".6"/><path d="M3.6 7.4 C4 6 5.4 5.4 6.8 5.6" fill="none" stroke="#8fe47c" stroke-width=".8"/><path d="M4.1 8.5 L5.6 10 L8 6.9" fill="none" stroke="#fff" stroke-width="1.3"/></svg>
<div class="t" style="left:244.6px;top:354px;letter-spacing:-0.2px;">03 - Reklamationsvorlage</div>
<div class="row" style="top:370px"><i></i></div>
<svg style="left:226px;top:372px" width="12" height="14" viewBox="0 0 12 14"><path d="M0.5 0.5 H8.4 L11.5 3.6 V13.5 H0.5 Z" fill="#fff" stroke="#62719e"/><path d="M8.4 0.5 V3.6 H11.5" fill="#e8ecf6" stroke="#62719e" stroke-width=".8"/><rect x="2" y="6" width="8" height="6.4" fill="#c4d3ee"/><circle cx="6" cy="8.4" r="3.5" fill="#35b329" stroke="#1f8c19" stroke-width=".6"/><path d="M3.6 7.4 C4 6 5.4 5.4 6.8 5.6" fill="none" stroke="#8fe47c" stroke-width=".8"/><path d="M4.1 8.5 L5.6 10 L8 6.9" fill="none" stroke="#fff" stroke-width="1.3"/></svg>
<div class="t" style="left:244px;top:373px;letter-spacing:0.06px;font-family:'DejaVu Sans Condensed','Liberation Sans',sans-serif;font-weight:bold;">Neue Vorlage</div>
<div class="row" style="top:389px"><i></i></div>
<svg style="left:226px;top:391px" width="12" height="14" viewBox="0 0 12 14"><path d="M0.5 0.5 H8.4 L11.5 3.6 V13.5 H0.5 Z" fill="#fff" stroke="#62719e"/><path d="M8.4 0.5 V3.6 H11.5" fill="#e8ecf6" stroke="#62719e" stroke-width=".8"/><rect x="2" y="6" width="8" height="6.4" fill="#c4d3ee"/><circle cx="6" cy="8.4" r="3.5" fill="#35b329" stroke="#1f8c19" stroke-width=".6"/><path d="M3.6 7.4 C4 6 5.4 5.4 6.8 5.6" fill="none" stroke="#8fe47c" stroke-width=".8"/><path d="M4.1 8.5 L5.6 10 L8 6.9" fill="none" stroke="#fff" stroke-width="1.3"/></svg>
<div class="t" style="left:244px;top:392px;letter-spacing:-0.25px;">RV - Deutsch</div>
<div class="row" style="top:408px"><i></i></div>
<svg style="left:226px;top:410px" width="12" height="14" viewBox="0 0 12 14"><path d="M0.5 0.5 H8.4 L11.5 3.6 V13.5 H0.5 Z" fill="#fff" stroke="#62719e"/><path d="M8.4 0.5 V3.6 H11.5" fill="#e8ecf6" stroke="#62719e" stroke-width=".8"/><rect x="2" y="6" width="8" height="6.4" fill="#c4d3ee"/><circle cx="6" cy="8.4" r="3.5" fill="#35b329" stroke="#1f8c19" stroke-width=".6"/><path d="M3.6 7.4 C4 6 5.4 5.4 6.8 5.6" fill="none" stroke="#8fe47c" stroke-width=".8"/><path d="M4.1 8.5 L5.6 10 L8 6.9" fill="none" stroke="#fff" stroke-width="1.3"/></svg>
<div class="t" style="left:244.6px;top:411px;letter-spacing:-0.11px;">Vorlage-1</div>
<div class="row" style="top:427px"><i></i></div>
<svg style="left:226px;top:429px" width="12" height="14" viewBox="0 0 12 14"><path d="M0.5 0.5 H8.4 L11.5 3.6 V13.5 H0.5 Z" fill="#fff" stroke="#62719e"/><path d="M8.4 0.5 V3.6 H11.5" fill="#e8ecf6" stroke="#62719e" stroke-width=".8"/><rect x="2" y="6" width="8" height="6.4" fill="#c4d3ee"/><circle cx="6" cy="8.4" r="3.5" fill="#35b329" stroke="#1f8c19" stroke-width=".6"/><path d="M3.6 7.4 C4 6 5.4 5.4 6.8 5.6" fill="none" stroke="#8fe47c" stroke-width=".8"/><path d="M4.1 8.5 L5.6 10 L8 6.9" fill="none" stroke="#fff" stroke-width="1.3"/></svg>
<div class="t" style="left:244.6px;top:430px;letter-spacing:-0.11px;">Vorlage-2</div>
<div class="row" style="top:446px"><i></i></div>
<svg style="left:226px;top:448px" width="12" height="14" viewBox="0 0 12 14"><path d="M0.5 0.5 H8.4 L11.5 3.6 V13.5 H0.5 Z" fill="#fff" stroke="#62719e"/><path d="M8.4 0.5 V3.6 H11.5" fill="#e8ecf6" stroke="#62719e" stroke-width=".8"/><rect x="2" y="6" width="8" height="6.4" fill="#c4d3ee"/><circle cx="6" cy="8.4" r="3.5" fill="#35b329" stroke="#1f8c19" stroke-width=".6"/><path d="M3.6 7.4 C4 6 5.4 5.4 6.8 5.6" fill="none" stroke="#8fe47c" stroke-width=".8"/><path d="M4.1 8.5 L5.6 10 L8 6.9" fill="none" stroke="#fff" stroke-width="1.3"/></svg>
<div class="t" style="left:244.6px;top:449px;letter-spacing:-0.11px;">Vorlage-3</div>
<div class="row" style="top:465px"><i></i></div>
<svg style="left:226px;top:467px" width="12" height="14" viewBox="0 0 12 14"><path d="M0.5 0.5 H8.4 L11.5 3.6 V13.5 H0.5 Z" fill="#fff" stroke="#62719e"/><path d="M8.4 0.5 V3.6 H11.5" fill="#e8ecf6" stroke="#62719e" stroke-width=".8"/><rect x="2" y="6" width="8" height="6.4" fill="#c4d3ee"/><circle cx="6" cy="8.4" r="3.5" fill="#35b329" stroke="#1f8c19" stroke-width=".6"/><path d="M3.6 7.4 C4 6 5.4 5.4 6.8 5.6" fill="none" stroke="#8fe47c" stroke-width=".8"/><path d="M4.1 8.5 L5.6 10 L8 6.9" fill="none" stroke="#fff" stroke-width="1.3"/></svg>
<div class="t" style="left:244.6px;top:468px;letter-spacing:-0.11px;">Vorlage-4</div>
</body>
</html>
